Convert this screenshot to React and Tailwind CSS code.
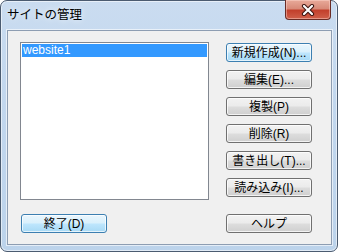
export default function App() {
  const btn =
    "flex items-center justify-center w-[86px] h-[19px] rounded-[3px] border border-[#707070] bg-[linear-gradient(to_bottom,#f2f2f2_0%,#ebebeb_48%,#dddddd_52%,#cfcfcf_100%)] shadow-[inset_0_0_0_1px_rgba(255,255,255,0.75)] text-[12px] leading-[14px] text-black";
  const btnDef =
    "flex items-center justify-center w-[86px] h-[19px] rounded-[3px] border border-[#3c7fb1] bg-[linear-gradient(to_bottom,#eaf6fd_0%,#d9f0fc_48%,#bee6fd_52%,#a7d9f5_100%)] shadow-[inset_0_0_0_1px_rgba(255,255,255,0.7)] text-[12px] leading-[14px] text-black";
  return (
    <div className="w-[338px] h-[252px] overflow-hidden font-['Liberation_Sans','Noto_Sans_CJK_JP',sans-serif]">
      <div className="flex flex-col w-[338px] h-[252px] rounded-[7px] border border-[#4b5b70] bg-[linear-gradient(to_bottom,#cadcf0_0%,#c2d7ee_40%,#bcd3eb_100%)] shadow-[inset_0_0_0_1px_rgba(255,255,255,0.55)]">
        <div className="flex h-[29px] items-start shrink-0">
          <span className="pl-[6px] pt-[7px] text-[12.5px] leading-[15px] text-black [text-shadow:0_0_6px_rgba(255,255,255,0.9)]">
            サイトの管理
          </span>
          <div className="ml-auto mr-[6px] -mt-px w-[46px] h-[20px] rounded-b-[4px] border border-[#6a2c25] border-t-0 bg-[linear-gradient(to_bottom,#e8aa9a_0%,#d88a78_45%,#c2402c_55%,#d0604a_100%)] shadow-[inset_0_0_0_1px_rgba(255,220,210,0.45)] flex items-center justify-center">
            <svg width="14" height="12" viewBox="0 0 14 12">
              <path d="M3 2 L11 10 M11 2 L3 10" stroke="#3b1410" strokeWidth="4.2" strokeLinecap="round" />
              <path d="M3 2 L11 10 M11 2 L3 10" stroke="#ffffff" strokeWidth="2.2" strokeLinecap="round" />
            </svg>
          </div>
        </div>
        <div className="ml-[6px] mr-[5px] h-[215px] shrink-0 border border-[#8d9db2] bg-[#f0f0f0] shadow-[0_0_0_1px_rgba(255,255,255,0.6)] pl-[12px] pt-[11px] flex flex-col">
          <div className="flex items-start">
            <div className="w-[189px] h-[158px] border border-[#828790] bg-white p-px">
              <div className="h-[13px] bg-[#3399ff] text-white text-[12px] leading-[13px] pl-px">
                website1
              </div>
            </div>
            <div className="ml-[17px] mt-px flex flex-col gap-[8px]">
              <div className={btnDef}>新規作成(N)...</div>
              <div className={btn}>編集(E)...</div>
              <div className={btn}>複製(P)</div>
              <div className={btn}>削除(R)</div>
              <div className={btn}>書き出し(T)...</div>
              <div className={btn}>読み込み(I)...</div>
            </div>
          </div>
          <div className="flex mt-[14px]">
            <div className="w-[189px] pl-px">
              <div className={btnDef}>終了(D)</div>
            </div>
            <div className="ml-[17px]">
              <div className={btn}>ヘルプ</div>
            </div>
          </div>
        </div>
      </div>
    </div>
  );
}
